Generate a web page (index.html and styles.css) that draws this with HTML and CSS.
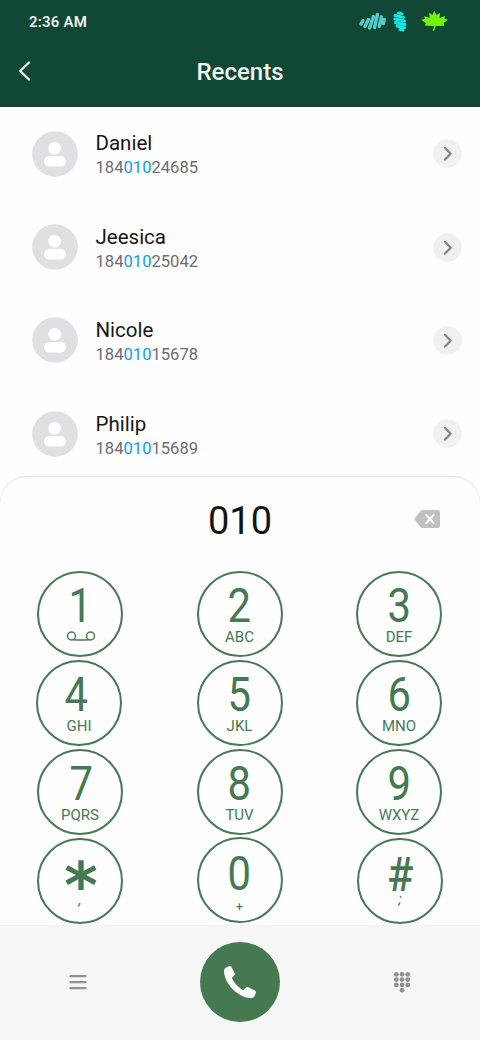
FILE: index.html
```html
<!DOCTYPE html>
<html lang="en">
<head>
<meta charset="utf-8">
<title>Recents</title>
<link rel="stylesheet" href="styles.css">
</head>
<body>
<div class="phone">
  <header class="header">
    <div class="status">
      <span class="time">2:36 AM</span>
      <svg class="status-icons" width="92" height="24" viewBox="0 0 92 24">
        <g stroke="#58c9cc" stroke-width="3.4" stroke-linecap="round">
          <path d="M3 14l2-3.500M7 16.500l3.500-7M11.500 18l4-11.500M16.500 17.500l3-13M21.200 16.500l2.300-9.500M25.300 13.500l1-4"/>
        </g>
        <g stroke="#14e6e6" stroke-width="2.900" stroke-linecap="round">
          <path d="M40.500 3l3.500 .8M37 5.500l8.500 1.900M37 9l9.500 2M37.500 12.500l9.500 2M39 16l7.500 1.700M42 19.500l3 .6"/>
        </g>
        <path d="M76.200 1l2.500 4 3.300-2.200-.4 5.200 5.400-2-.6 2.800 3.600 1-4.500 3.500 1 2.400-9 .2q-.3 3-1.500 5l-1.500-.3q1.200-2 1.400-4.700l-9-.2 1-2.400-4.700-3.500 3.800-1-.8-2.800 5.400 2-.4-5.200 3.200 2.200z" fill="#72f408"/>
      </svg>
    </div>
    <div class="titlebar">
      <svg class="back" width="14" height="20" viewBox="0 0 14 20"><path d="M11 1.500L2.200 10 11 18.500" fill="none" stroke="#f1f3f1" stroke-width="2.300" stroke-linecap="round" stroke-linejoin="round"/></svg>
      <h1 class="title">Recents</h1>
    </div>
  </header>

  <main class="list">
    <div class="row">
      <svg class="avatar" viewBox="0 0 46 46"><circle cx="23" cy="23" r="22.800"/><circle class="person" cx="22.700" cy="17.200" r="6.300"/><rect class="person" x="12" y="25" width="22" height="10.400" rx="5.200"/></svg>
      <div class="info"><div class="name">Daniel</div><div class="number">184<b>010</b>24685</div></div>
      <svg class="go" viewBox="0 0 29 29"><circle cx="14.500" cy="14.500" r="14.300"/><path d="M12 8.800l5.700 5.900-5.700 5.900"/></svg>
    </div>
    <div class="row">
      <svg class="avatar" viewBox="0 0 46 46"><circle cx="23" cy="23" r="22.800"/><circle class="person" cx="22.700" cy="17.200" r="6.300"/><rect class="person" x="12" y="25" width="22" height="10.400" rx="5.200"/></svg>
      <div class="info"><div class="name">Jeesica</div><div class="number">184<b>010</b>25042</div></div>
      <svg class="go" viewBox="0 0 29 29"><circle cx="14.500" cy="14.500" r="14.300"/><path d="M12 8.800l5.700 5.900-5.700 5.900"/></svg>
    </div>
    <div class="row">
      <svg class="avatar" viewBox="0 0 46 46"><circle cx="23" cy="23" r="22.800"/><circle class="person" cx="22.700" cy="17.200" r="6.300"/><rect class="person" x="12" y="25" width="22" height="10.400" rx="5.200"/></svg>
      <div class="info"><div class="name">Nicole</div><div class="number">184<b>010</b>15678</div></div>
      <svg class="go" viewBox="0 0 29 29"><circle cx="14.500" cy="14.500" r="14.300"/><path d="M12 8.800l5.700 5.900-5.700 5.900"/></svg>
    </div>
    <div class="row">
      <svg class="avatar" viewBox="0 0 46 46"><circle cx="23" cy="23" r="22.800"/><circle class="person" cx="22.700" cy="17.200" r="6.300"/><rect class="person" x="12" y="25" width="22" height="10.400" rx="5.200"/></svg>
      <div class="info"><div class="name">Philip</div><div class="number">184<b>010</b>15689</div></div>
      <svg class="go" viewBox="0 0 29 29"><circle cx="14.500" cy="14.500" r="14.300"/><path d="M12 8.800l5.700 5.900-5.700 5.900"/></svg>
    </div>
  </main>

  <section class="sheet">
    <div class="entry">
      <span class="typed">010</span>
      <svg class="erase" width="27" height="20" viewBox="0 0 27 20"><path d="M8.500 1H24q2 0 2 2v14q0 2-2 2H8.500q-1 0-1.700-.8L.8 11q-.8-1 0-2l6-7.200Q7.500 1 8.500 1z" fill="#c0c0c0"/><path d="M12.200 6l7.300 8M19.500 6l-7.300 8" stroke="#fff" stroke-width="2" stroke-linecap="round"/></svg>
    </div>
    <div class="keypad">
      <div class="key"><span class="digit">1</span><svg class="voicemail" width="30" height="11" viewBox="0 0 30 11"><g fill="none" stroke="#457a51" stroke-width="1.500"><circle cx="5.500" cy="5" r="4"/><circle cx="24.500" cy="5" r="4"/><path d="M7 8.700q8 .8 16 0"/></g></svg></div>
      <div class="key"><span class="digit">2</span><span class="letters">ABC</span></div>
      <div class="key"><span class="digit">3</span><span class="letters">DEF</span></div>
      <div class="key key-four"><span class="digit">4</span><span class="letters">GHI</span></div>
      <div class="key"><span class="digit">5</span><span class="letters">JKL</span></div>
      <div class="key"><span class="digit">6</span><span class="letters">MNO</span></div>
      <div class="key key-seven"><span class="digit">7</span><span class="letters">PQRS</span></div>
      <div class="key"><span class="digit">8</span><span class="letters">TUV</span></div>
      <div class="key"><span class="digit">9</span><span class="letters">WXYZ</span></div>
      <div class="key key-last key-star"><span class="digit star">*</span><span class="letters mark">,</span></div>
      <div class="key key-last"><span class="digit">0</span><span class="letters plus">+</span></div>
      <div class="key key-last key-hash"><span class="digit hash">#</span><span class="letters semi">;</span></div>
    </div>
  </section>

  <footer class="bar">
    <svg class="menu" width="18" height="16" viewBox="0 0 18 16"><path d="M1.500 2.200h15M1.500 8.200h15M1.500 14.200h15" stroke="#919191" stroke-width="2.200" stroke-linecap="round"/></svg>
    <div class="call"><svg width="34" height="34" viewBox="0 0 34 34"><path d="M2.800 2.700L6.200 1.100Q7.600.5 8.300 1.800L11.600 8Q12.300 9.200 11.400 10.200L8.800 13.100Q12.500 20.500 20 25.200L23.200 22.500Q24.200 21.700 25.300 22.200L31.500 25.300Q33.400 26.300 32.800 28L31.200 31.500Q30.400 33.100 28.500 33.100C15.500 33.100 1 18.500 1 5.700Q1 3.600 2.800 2.700z" fill="#fff"/></svg></div>
    <svg class="pad" width="18" height="22" viewBox="0 0 18 22"><g fill="#919191"><circle cx="3.300" cy="3.300" r="2.400"/><circle cx="9" cy="3.300" r="2.400"/><circle cx="14.700" cy="3.300" r="2.400"/><circle cx="3.300" cy="8.600" r="2.400"/><circle cx="9" cy="8.600" r="2.400"/><circle cx="14.700" cy="8.600" r="2.400"/><circle cx="3.300" cy="13.900" r="2.400"/><circle cx="9" cy="13.900" r="2.400"/><circle cx="14.700" cy="13.900" r="2.400"/><circle cx="9" cy="19.200" r="2.400"/></g></svg>
  </footer>
</div>
</body>
</html>
```

FILE: styles.css
```css
* { box-sizing: border-box; }
body { margin: 0; font-family: Roboto, sans-serif; background: #fefefe; }
svg { display: block; flex: none; }
.phone { width: 480px; height: 1040px; display: flex; flex-direction: column; overflow: hidden; background: #fefefe; }

.header { height: 107px; flex: none; background: #104735; color: #f1f3f1; }
.status { height: 44px; display: flex; align-items: center; justify-content: space-between; padding: 0 30px 0 29px; }
.time { font-size: 15px; font-weight: 600; line-height: 20px; letter-spacing: .2px; }
.titlebar { display: grid; grid-template-columns: 60px 1fr 60px; align-items: center; height: 56px; }
.back { margin-left: 18px; margin-top: -2px; }
.title { margin: 0; font-size: 24px; font-weight: 500; line-height: 28px; text-align: center; }

.list { flex: none; }
.row { height: 93.400px; display: flex; align-items: center; padding: 0 18px 0 32px; }
.avatar { width: 46px; height: 46px; fill: #dfe0e4; }
.person { fill: #fff; }
.info { flex: 1; margin-left: 17.500px; padding-top: 4px; }
.name { font-size: 20.500px; line-height: 26px; color: #161616; }
.number { font-size: 16.600px; line-height: 24.500px; color: #6d6d6d; }
.number b { font-weight: 400; color: #0d9bf5; }
.go { width: 29px; height: 29px; fill: #f0f0f0; }
.go path { fill: none; stroke: #858585; stroke-width: 2.200; stroke-linecap: round; stroke-linejoin: round; }

.sheet { z-index: 1; flex: none; height: 449px; margin-top: -4.600px; background: #fefefe; box-shadow: inset 0 1px 0 #e3e3e3, 0 0 1px #d8d8d8; border-radius: 27px 27px 0 0; padding-top: 1px; }
.entry { height: 94px; display: grid; grid-template-columns: 1fr 80px 1fr; align-items: center; padding-bottom: 6px; }
.typed { grid-column: 2; text-align: center; font-size: 38px; line-height: 46px; color: #141414; }
.erase { justify-self: end; margin-right: 39px; margin-top: -3px; }
.keypad { display: grid; grid-template-columns: repeat(3, 86px); grid-auto-rows: 86px; column-gap: 73.500px; row-gap: 2.800px; padding-left: 37px; }
.key { width: 86px; height: 86px; border: 2px solid #457a51; border-radius: 50%; display: flex; flex-direction: column; align-items: center; color: #457a51; padding-top: 14px; }
.digit { font-size: 47.500px; line-height: 38px; height: 38px; transform: scaleX(.88); }
.letters { font-size: 15px; line-height: 18px; margin-top: 3px; }
.voicemail { margin: 6px 0 0 2px; }
.key-four { margin-left: -1px; }
.key-four .digit { margin-right: 6px; }
.key-seven .digit { margin-left: 3px; }
.key-last { padding-top: 16px; }
.key-star, .key-hash { margin-top: 1px; }
.key-hash { margin-left: 1px; }
.star { font-family: "DejaVu Sans", sans-serif; font-weight: 700; font-size: 64px; line-height: 60px; transform: none; margin-left: 2px; }
.hash { font-weight: 500; transform: scaleX(.92); }
.mark { margin-top: -3px; font-style: italic; }
.semi { margin-top: -4px; font-style: italic; }
.plus { font-size: 13px; margin-top: 6px; line-height: 16px; }

.bar { flex: none; height: 115px; background: #f6f6f6; display: grid; grid-template-columns: 156px 1fr 156px; align-items: center; justify-items: center; }
.call { width: 80px; height: 80px; border-radius: 50%; background: #457a51; display: flex; align-items: center; justify-content: center; }
```
